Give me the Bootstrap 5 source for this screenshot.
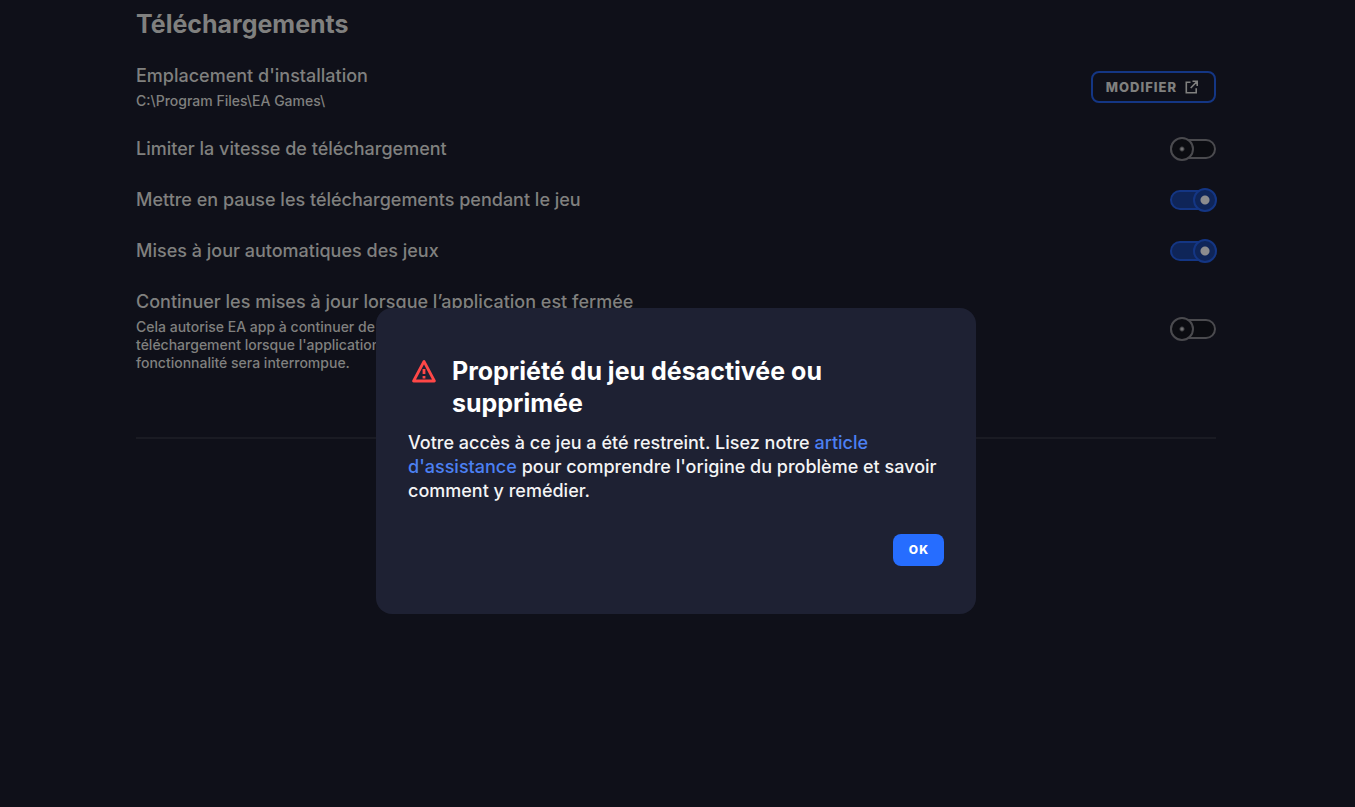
<!DOCTYPE html>
<html lang="fr" data-bs-theme="dark">
<head>
<meta charset="utf-8">
<meta name="viewport" content="width=device-width, initial-scale=1">
<title>Téléchargements</title>
<link href="https://cdn.jsdelivr.net/npm/bootstrap@5.3.0/dist/css/bootstrap.min.css" rel="stylesheet">
<style>
  :root { --ink: #80807f; --ring: #143684; }
  body {
    background: #0f1019;
    color: var(--ink);
    font-family: Inter, "Liberation Sans", sans-serif;
    font-weight: 500;
    padding-right: 3px;
  }
  .settings { max-width: 1080px; padding-top: 8px; }
  .page-title { color: var(--ink); font-size: 25px; line-height: 32px; font-weight: 700; margin-bottom: 24px; }
  .setting { margin-bottom: 27px; }
  .setting-name { font-size: 18px; line-height: 24px; display: block; }
  .setting-note { font-size: 14px; line-height: 18px; margin: 4px 0 0; max-width: 580px; }
  .rule { height: 2px; margin: 65px 0 0; border: 0; background: #1a1b23; opacity: 1; }
  .label-caps { line-height: 16px; font-weight: 800; letter-spacing: 1px; border-radius: 8px; height: 32px; }
  .btn-edit { --bs-btn-color: var(--ink); --bs-btn-border-color: var(--ring); font-size: 13px; border-width: 2px; padding: 0 16px 0 13px; }
  .btn-ok { --bs-btn-color: #fff; --bs-btn-bg: #266dff; --bs-btn-hover-bg: #4782ff; font-size: 12px; border: 0; padding: 0 15px 0 16px; }

  .toggle { width: 46px; height: 24px; appearance: none; margin: 0; position: relative; flex: none; }
  .toggle::before {
    content: ""; position: absolute; inset: 2px 0; border: 2px solid #4a4a4e; border-radius: 10px; background: #0b0c11;
  }
  .toggle::after {
    content: ""; position: absolute; top: 0; left: 0; width: 24px; height: 24px; border: 2px solid #4a4a4e; border-radius: 50%;
    background: radial-gradient(circle, #707072 1px, #0b0c11 3px);
  }
  .toggle:checked::before { border-color: var(--ring); background: #0f2558; }
  .toggle:checked::after {
    left: auto; right: -1px; border-color: var(--ring);
    background: radial-gradient(circle, #8c8c8e 4px, #0f2558 5px);
  }

  .notice { padding-right: 3px; }
  .notice .modal-dialog { max-width: 600px; margin: 308px auto 0; }
  .notice .modal-content { background: #1e2133; border: 0; border-radius: 16px; padding: 47px 32px 48px; color: #fff; }
  .notice-title { font-size: 25px; line-height: 32px; font-weight: 700; }
  .notice-text { font-size: 18px; line-height: 24px; margin: 12px 0 31px; color: #f4f4f5; }
  .notice-text a { color: #4c80f2; text-decoration: none; }
</style>
</head>
<body>
<main class="settings mx-auto">
  <h1 class="page-title">Téléchargements</h1>

  <div class="setting d-flex justify-content-between align-items-center">
    <div>
      <span class="setting-name">Emplacement d'installation</span>
      <p class="setting-note">C:\Program Files\EA Games\</p>
    </div>
    <button type="button" class="btn btn-edit label-caps d-flex align-items-center gap-2">MODIFIER
      <svg width="13" height="14" viewBox="0 0 13 14" fill="none" stroke="currentColor" stroke-width="1.6" aria-hidden="true">
        <path d="M5.5 2.3H1.3v10.4h9.9V8.2M7.5 1.3h4.7V6M12 1.5 5.7 8"/>
      </svg>
    </button>
  </div>

  <div class="setting d-flex justify-content-between align-items-center">
    <label class="setting-name" for="limit">Limiter la vitesse de téléchargement</label>
    <input class="toggle" type="checkbox" role="switch" id="limit">
  </div>
  <div class="setting d-flex justify-content-between align-items-start">
    <label class="setting-name" for="pause">Mettre en pause les téléchargements pendant le jeu</label>
    <input class="toggle" type="checkbox" role="switch" id="pause" checked>
  </div>
  <div class="setting d-flex justify-content-between align-items-start">
    <label class="setting-name" for="auto">Mises à jour automatiques des jeux</label>
    <input class="toggle" type="checkbox" role="switch" id="auto" checked>
  </div>
  <div class="d-flex justify-content-between align-items-center">
    <div>
      <label class="setting-name" for="closed">Continuer les mises à jour lorsque l’application est fermée</label>
      <p class="setting-note">Cela autorise EA app à continuer de gérer vos téléchargements et votre file de téléchargement lorsque l'application est fermée. Si vous vous déconnectez, cette fonctionnalité sera interrompue.</p>
    </div>
    <input class="toggle mb-1" type="checkbox" role="switch" id="closed">
  </div>
  <hr class="rule">
</main>

<div class="modal notice d-block" tabindex="-1" role="alertdialog" aria-modal="true" aria-labelledby="notice-title">
  <div class="modal-dialog">
    <div class="modal-content">
      <div class="d-flex align-items-start">
        <svg class="flex-shrink-0 mx-1 mt-1" width="24" height="24" viewBox="0 0 24 24" fill="none" stroke="#ff4747" stroke-width="2.8" stroke-linejoin="round" aria-hidden="true">
          <path d="M12 2.4 1.6 22h20.8z"/>
          <path d="M12 10v5M12 17v2.4"/>
        </svg>
        <h2 class="notice-title mb-0 ms-2 ps-1" id="notice-title">Propriété du jeu désactivée ou supprimée</h2>
      </div>
      <p class="notice-text">Votre accès à ce jeu a été restreint. Lisez notre <a href="#">article d'assistance</a> pour comprendre l'origine du problème et savoir comment y remédier.</p>
      <button type="button" class="btn btn-ok label-caps align-self-end">OK</button>
    </div>
  </div>
</div>
<script src="https://cdn.jsdelivr.net/npm/bootstrap@5.3.0/dist/js/bootstrap.bundle.min.js"></script>
</body>
</html>
